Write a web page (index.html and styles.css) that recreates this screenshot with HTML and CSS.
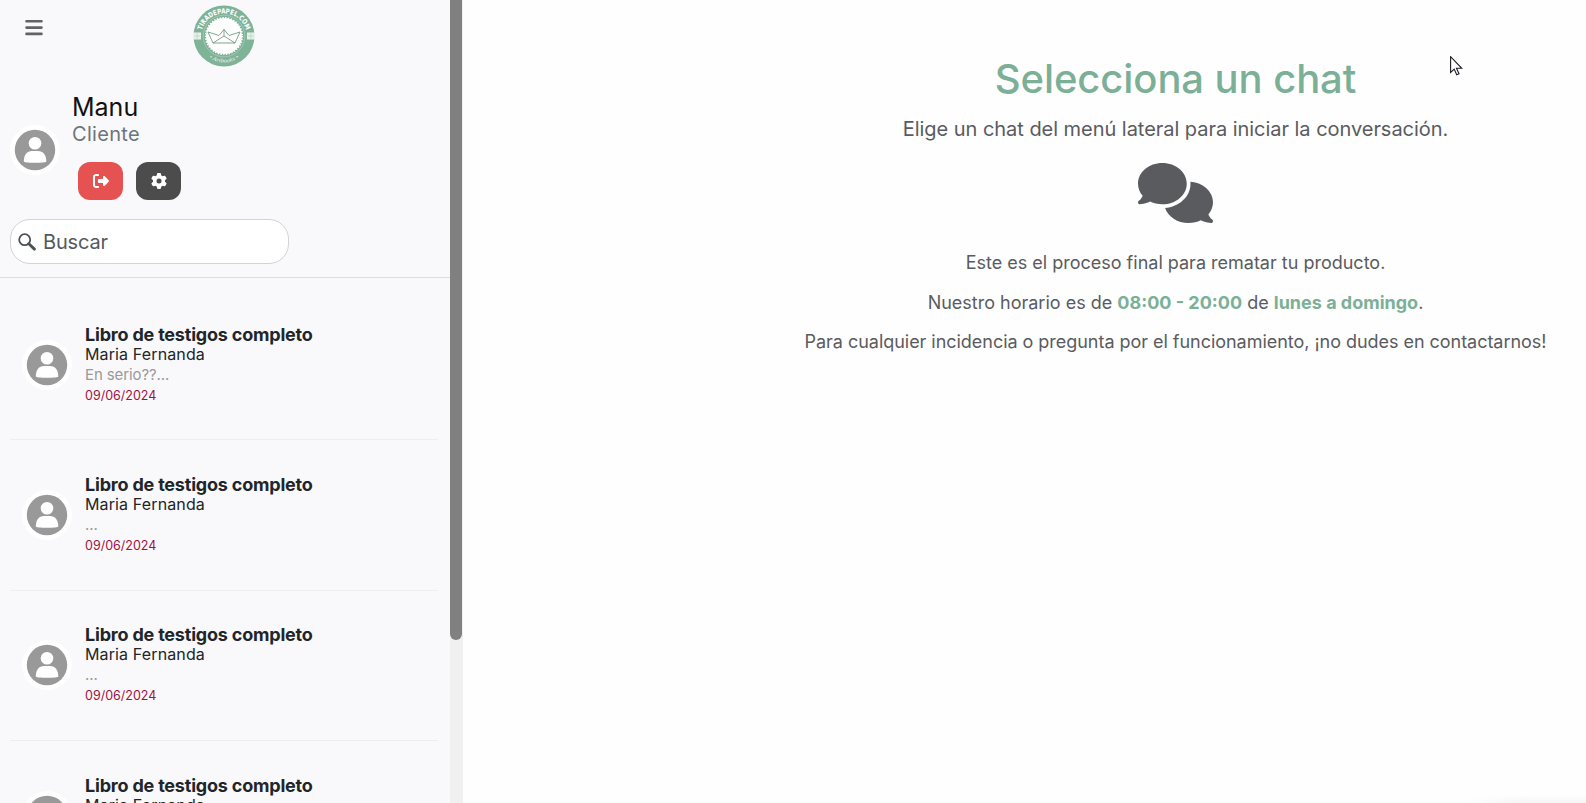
FILE: index.html
```html
<!DOCTYPE html>
<html lang="es">
<head>
<meta charset="utf-8">
<title>Chat</title>
<link rel="stylesheet" href="styles.css">
</head>
<body>
<svg class="defs" width="0" height="0">
  <symbol id="user" viewBox="0 0 50 50">
    <circle cx="25" cy="25" r="25" fill="#fff"/>
    <circle cx="25" cy="25" r="20.2" fill="#999"/>
    <circle cx="25" cy="18.200" r="6.300" fill="#fff"/>
    <path fill="#fff" d="M13.800 36.600C13.800 29.500 17 26 22 26h6c5 0 8.300 3.500 8.300 10.600 0 .9-4.500 1.200-11.300 1.200s-11.200-.3-11.200-1.200z"/>
  </symbol>
</svg>
<div class="app">
  <aside class="sidebar">
    <div class="top">
      <svg class="menu" width="18" height="17" viewBox="0 0 18 17" fill="none" stroke="#636366" stroke-width="2.600" stroke-linecap="round"><path d="M1.500 2.300h15M1.500 8.600h15M1.500 14.900h15"/></svg>
      <svg class="logo" width="62" height="62" viewBox="0 0 62 62">
        <defs>
          <path id="arcTop" d="M8 31.500a23 23 0 0 1 46 0"/>
          <path id="arcBottom" d="M5 31a26 26.500 0 0 0 52 0"/>
        </defs>
        <circle cx="31" cy="31" r="30.500" fill="#7fb398"/>
        <circle cx="31" cy="31" r="20.800" fill="none" stroke="#b5d3c3" stroke-width=".6"/>
        <circle cx="31" cy="31" r="18" fill="#fff"/>
        <circle cx="31" cy="31" r="18.300" fill="none" stroke="#fff" stroke-width="1.600" stroke-dasharray="1.400 1.400"/>
        <path d="M0 27.500h8v7H0zM54 27.500h8v7h-8z" fill="#e7f1ec"/>
        <path d="M1 31h6M4 28v6M55 31h6M58 28v6" stroke="#b5d3c3" stroke-width=".7"/>
        <text class="logo-name"><textPath href="#arcTop" startOffset="50%" text-anchor="middle" textLength="59" lengthAdjust="spacingAndGlyphs">TIRADEPAPEL.COM</textPath></text>
        <text class="logo-sub"><textPath href="#arcBottom" startOffset="50%" text-anchor="middle" textLength="32" lengthAdjust="spacingAndGlyphs">•  Artbooks  •</textPath></text>
        <path d="M15 27l5 11h22l5-11-11 3.500-5-6-5 6zM20 38l11-7 11 7M31 24.500v6.500" fill="none" stroke="#5f8f79" stroke-width=".8" stroke-linejoin="round"/>
      </svg>
    </div>
    <div class="profile">
      <svg class="avatar"><use href="#user"/></svg>
      <div class="who">
        <div class="name">Manu</div>
        <div class="role">Cliente</div>
        <div class="actions">
          <button class="btn logout" aria-label="Salir"><svg width="16" height="16" viewBox="0 0 512 512"><path fill="#fff" d="M377.900 105.900L500.700 228.700c7.200 7.200 11.300 17.100 11.300 27.300s-4.100 20.100-11.300 27.300L377.900 406.100c-6.400 6.400-15 9.900-24 9.900c-18.700 0-33.900-15.200-33.900-33.900l0-62.100-128 0c-17.700 0-32-14.300-32-32l0-64c0-17.700 14.300-32 32-32l128 0 0-62.100c0-18.700 15.200-33.900 33.900-33.900c9 0 17.600 3.600 24 9.900zM160 96L96 96c-17.700 0-32 14.300-32 32l0 256c0 17.700 14.300 32 32 32l64 0c17.700 0 32 14.300 32 32s-14.300 32-32 32l-64 0c-53 0-96-43-96-96L0 128C0 75 43 32 96 32l64 0c17.700 0 32 14.300 32 32s-14.300 32-32 32z"/></svg></button>
          <button class="btn config" aria-label="Ajustes"><svg width="16" height="16" viewBox="0 0 512 512"><path fill="#fff" d="M495.900 166.600c3.200 8.700 .5 18.400-6.400 24.600l-43.300 39.400c1.100 8.300 1.700 16.800 1.700 25.400s-.6 17.100-1.700 25.400l43.300 39.400c6.900 6.200 9.600 15.900 6.400 24.600c-4.400 11.900-9.700 23.300-15.800 34.300l-4.700 8.100c-6.600 11-14 21.400-22.100 31.200c-5.900 7.200-15.700 9.600-24.500 6.800l-55.700-17.700c-13.400 10.300-28.200 18.900-44 25.400l-12.500 57.100c-2 9.100-9 16.300-18.200 17.800c-13.800 2.300-28 3.500-42.500 3.500s-28.700-1.200-42.500-3.500c-9.200-1.500-16.200-8.700-18.200-17.800l-12.500-57.100c-15.800-6.500-30.600-15.100-44-25.400L83.100 425.900c-8.800 2.800-18.600 .3-24.500-6.800c-8.100-9.800-15.500-20.200-22.100-31.200l-4.700-8.100c-6.100-11-11.400-22.400-15.800-34.300c-3.200-8.700-.5-18.400 6.400-24.600l43.300-39.400C64.600 273.100 64 264.600 64 256s.6-17.100 1.700-25.400L22.400 191.200c-6.900-6.200-9.600-15.900-6.400-24.600c4.400-11.900 9.700-23.300 15.800-34.300l4.700-8.100c6.600-11 14-21.400 22.100-31.200c5.900-7.200 15.700-9.600 24.500-6.800l55.700 17.700c13.400-10.300 28.200-18.900 44-25.400l12.500-57.100c2-9.100 9-16.300 18.200-17.800C227.300 1.200 241.500 0 256 0s28.700 1.200 42.500 3.500c9.200 1.500 16.200 8.700 18.200 17.800l12.500 57.100c15.800 6.500 30.600 15.100 44 25.400l55.700-17.700c8.800-2.800 18.600-.3 24.500 6.800c8.100 9.800 15.500 20.200 22.100 31.200l4.700 8.100c6.100 11 11.400 22.400 15.800 34.300zM256 336a80 80 0 1 0 0-160 80 80 0 1 0 0 160z"/></svg></button>
        </div>
      </div>
    </div>
    <div class="search">
      <svg width="18" height="18" viewBox="0 0 18 18" fill="none" stroke="#4c5054"><circle cx="6.700" cy="6.700" r="5.500" stroke-width="1.800"/><path d="M10.800 10.800l5.600 5.300" stroke-width="2.900" stroke-linecap="round"/></svg>
      <span>Buscar</span>
    </div>
    <div class="chats">
      <div class="chat"><svg class="avatar"><use href="#user"/></svg><div class="info"><div class="product">Libro de testigos completo</div><div class="person">Maria Fernanda</div><div class="last">En serio??...</div><div class="date">09/06/2024</div></div></div>
      <div class="chat"><svg class="avatar"><use href="#user"/></svg><div class="info"><div class="product">Libro de testigos completo</div><div class="person">Maria Fernanda</div><div class="last">...</div><div class="date">09/06/2024</div></div></div>
      <div class="chat"><svg class="avatar"><use href="#user"/></svg><div class="info"><div class="product">Libro de testigos completo</div><div class="person">Maria Fernanda</div><div class="last">...</div><div class="date">09/06/2024</div></div></div>
      <div class="chat"><svg class="avatar"><use href="#user"/></svg><div class="info"><div class="product">Libro de testigos completo</div><div class="person">Maria Fernanda</div><div class="last">...</div><div class="date">09/06/2024</div></div></div>
    </div>
  </aside>
  <div class="track"><div class="thumb"></div></div>
  <main class="main">
    <h1>Selecciona un chat</h1>
    <p class="lead">Elige un chat del menú lateral para iniciar la conversación.</p>
    <svg class="bubbles" width="75" height="60" viewBox="0 0 640 512"><path fill="#5a5b5f" d="M208 352c114.900 0 208-78.800 208-176S322.900 0 208 0S0 78.800 0 176c0 38.600 14.700 74.300 39.600 103.400c-3.500 9.400-8.700 17.700-14.200 24.700c-4.800 6.200-9.700 11-13.300 14.300c-1.800 1.600-3.300 2.900-4.300 3.700c-.5 .4-.9 .7-1.100 .8l-.2 .2C1 327.200-1.400 334.400 .8 340.900S9.100 352 16 352c21.800 0 43.800-5.600 62.100-12.500c9.200-3.500 17.800-7.400 25.300-11.400C134.100 343.300 169.800 352 208 352zM448 176c0 112.300-99.100 196.900-216.500 207C255.800 457.400 336.400 512 432 512c38.200 0 73.900-8.700 104.700-23.900c7.500 4 16 7.900 25.200 11.400c18.300 6.900 40.300 12.500 62.100 12.500c6.900 0 13.100-4.500 15.200-11.100c2.100-6.600-.2-13.800-5.800-17.900l-.2-.2c-.2-.2-.6-.4-1.100-.8c-1-.8-2.500-2-4.300-3.700c-3.600-3.300-8.500-8.100-13.300-14.300c-5.500-7-10.700-15.400-14.200-24.700c24.900-29 39.600-64.700 39.600-103.400c0-92.800-84.900-168.900-192.600-175.500c.4 5.100 .6 10.300 .6 15.500z"/></svg>
    <p class="text">Este es el proceso final para rematar tu producto.</p>
    <p class="text">Nuestro horario es de <b>08:00 - 20:00</b> de <b>lunes a domingo</b>.</p>
    <p class="text long">Para cualquier incidencia o pregunta por el funcionamiento, ¡no dudes en contactarnos!</p>
  </main>
</div>
<svg class="cursor" width="13" height="20" viewBox="0 0 13 20"><path d="M.6.7v15.800l3.600-3.400 2.500 5.600 2.300-1-2.500-5.400h5.300z" fill="#fff" stroke="#1b1b22" stroke-width="1.100"/></svg>
<div class="glow"></div>
</body>
</html>
```
FILE: styles.css
```css
* { box-sizing: border-box; }
body {
  margin: 0;
  height: 803px;
  overflow: hidden;
  position: relative;
  background: #fefefe;
  font-family: Inter, "Liberation Sans", sans-serif;
  color: #212529;
}
.defs { position: absolute; }
.app { display: flex; height: 803px; overflow: hidden; }
.sidebar { width: 450px; flex: none; background: #f9f9fb; overflow: hidden; }
.top { display: grid; grid-template-columns: 193px 62px; height: 94px; padding-top: 5px; align-items: start; }
.menu { margin: 14px 0 0 25px; }
.logo-name { font: 800 7px "DejaVu Sans", sans-serif; fill: #fff; }
.logo-sub { font: italic 5.500px "Liberation Serif", serif; fill: #e7f1ec; }
.avatar { width: 50px; height: 50px; flex: none; display: block; }
.profile { display: flex; align-items: center; gap: 12px; height: 111px; padding-left: 10px; }
.who { padding-bottom: 6px; }
.name { font-size: 25px; line-height: 27px; color: #111; }
.role { font-size: 20px; line-height: 27px; letter-spacing: .3px; color: #6c757d; }
.actions { display: flex; gap: 13px; padding: 14px 0 0 6px; }
.btn { width: 45px; height: 38px; border: 0; border-radius: 12px; padding: 0; display: flex; align-items: center; justify-content: center; }
.logout { background: #e65252; }
.config { background: #4c4c4d; }
.search {
  display: flex;
  align-items: center;
  gap: 7px;
  width: 279px;
  height: 45px;
  margin: 14px 0 13px 10px;
  padding-left: 7px;
  border: 1px solid #ced4da;
  border-radius: 20px;
  background: #fff;
  font-size: 20px;
  letter-spacing: -.15px;
  color: #55595d;
}
.chats { border-top: 1px solid #dcdddf; padding: 12px 12px 0 10px; }
.chat { display: flex; align-items: center; gap: 13px; height: 150.400px; padding-left: 12px; border-bottom: 1px solid #eeeeee; }
.info { padding-top: 1px; }
.product { font-size: 18px; line-height: 20px; font-weight: 700; letter-spacing: -.2px; }
.person { font-size: 16px; line-height: 18px; padding-bottom: 2px; letter-spacing: .13px; }
.last { font-size: 15px; line-height: 20px; letter-spacing: -.1px; color: #999; }
.date { font-size: 12.500px; line-height: 21px; color: #a3123f; }
.track { width: 13px; flex: none; background: #f0f0f0; }
.thumb { width: 12px; height: 640px; background: #808080; border-radius: 0 0 6px 6px; }
.main { flex: 1; display: flex; flex-direction: column; align-items: center; padding: 55px 0 0 302px; color: #5a5b5f; }
.main h1 { margin: 0; font-size: 40px; line-height: 48px; font-weight: 500; letter-spacing: -.08px; color: #7bb097; }
.main p { margin: 0; white-space: nowrap; }
.main .lead { font-size: 20px; line-height: 30px; margin-top: 11px; letter-spacing: -.04px; }
.bubbles { margin: 19px 0 26px; }
.main .text { font-size: 18px; line-height: 28px; margin-bottom: 11.500px; }
.main .long { letter-spacing: -.035px; }
.text b { color: #7bb097; }
.cursor { position: absolute; left: 1450px; top: 56px; }
.glow { position: absolute; right: 0; bottom: 0; width: 120px; height: 8px; background: linear-gradient(to right, #fefefe, transparent 50px), linear-gradient(#fefefe, #f5f5f5); }
```
